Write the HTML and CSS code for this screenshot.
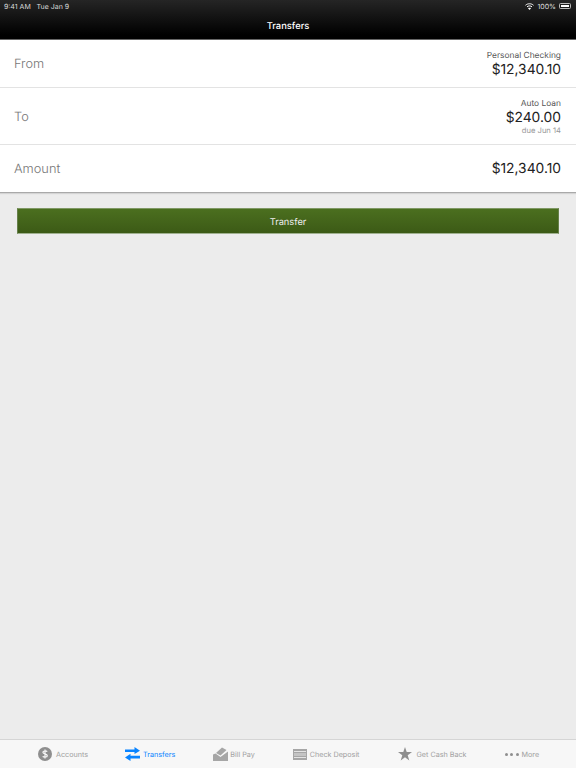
FILE: index.html
```html
<!DOCTYPE html>
<html lang="en">
<head>
  <meta charset="UTF-8" />
  <meta name="viewport" content="width=device-width, initial-scale=1.0"/>
  <title>Transfers</title>
  <link rel="stylesheet" href="styles.css">
</head>
<body>

<div class="app">
  <div class="top-bar">
    <div class="status-bar">
      <span class="status-time">9:41 AM&nbsp;&nbsp; Tue Jan 9</span>
      <span class="status-right">
        <svg class="wifi-icon" width="9" height="7" viewBox="0 0 18 14">
          <path d="M1 4.5 C5.5 0.5 12.5 0.5 17 4.5" fill="none" stroke="#fff" stroke-width="2"/>
          <path d="M4 7.7 C7 5.2 11 5.2 14 7.7" fill="none" stroke="#fff" stroke-width="2"/>
          <path d="M9 14 L6 10.6 C8 9.4 10 9.4 12 10.6 Z" fill="#fff"/>
        </svg>
        <span>100%</span>
        <span class="battery"><span class="battery-fill"></span></span>
      </span>
    </div>
    <div class="nav-title">Transfers</div>
  </div>

  <!-- transfer form -->
  <div class="form-card">
    <div class="form-row row-from">
      <div class="row-label">From</div>
      <div class="row-value">
        <div class="value-name">Personal Checking</div>
        <div class="value-amount">$12,340.10</div>
      </div>
    </div>
    <div class="form-row row-to">
      <div class="row-label">To</div>
      <div class="row-value">
        <div class="value-name">Auto Loan</div>
        <div class="value-amount">$240.00</div>
        <div class="value-due">due Jun 14</div>
      </div>
    </div>
    <div class="form-row row-amount">
      <div class="row-label">Amount</div>
      <div class="row-value">
        <div class="value-amount">$12,340.10</div>
      </div>
    </div>
  </div>

  <div class="button-wrap">
    <button class="transfer-btn">Transfer</button>
  </div>

  <!-- bottom tabs -->
  <div class="tab-bar">
    <div class="tab tab-accounts">
      <svg width="14" height="14" viewBox="0 0 14 14">
        <circle cx="7" cy="7" r="7" fill="#8e8e8e"/>
        <path d="M9.2 4.6 C8.6 3.8 4.9 3.5 4.9 5.3 C4.9 7.1 9.3 6.7 9.3 8.7 C9.3 10.5 5.4 10.2 4.7 9.3 M7 2.4 V11.6" fill="none" stroke="#f7f7f7" stroke-width="1.2"/>
      </svg>
      <span>Accounts</span>
    </div>
    <div class="tab tab-transfers active">
      <svg width="15" height="14" viewBox="0 0 15 14">
        <path d="M0 2.4 H9.5 V0 L15 3.8 L9.5 7 V5 H0 Z" fill="#0a84ff"/>
        <path d="M15 8.8 H5.5 V6.8 L0 10.4 L5.5 14 V11.4 H15 Z" fill="#0a84ff"/>
      </svg>
      <span>Transfers</span>
    </div>
    <div class="tab tab-billpay">
      <svg width="15" height="14" viewBox="0 0 15 14">
        <path d="M3 6 L9 0.5 L13.5 3 L7.5 8.5 Z" fill="#a6a6a6"/>
        <path d="M0 7.5 L2.5 6.5 L7.5 10 L15 4.5 V14 H0 Z" fill="#a6a6a6"/>
      </svg>
      <span>Bill Pay</span>
    </div>
    <div class="tab tab-deposit">
      <svg width="14" height="11" viewBox="0 0 14 11">
        <rect width="14" height="11" fill="#a6a6a6"/>
        <rect x="1" y="2" width="12" height="1" fill="#e4e4e4"/>
        <rect x="1" y="4" width="12" height="3" fill="#c4c4c4"/>
        <rect x="1" y="8" width="12" height="1" fill="#e4e4e4"/>
      </svg>
      <span>Check Deposit</span>
    </div>
    <div class="tab tab-cash">
      <svg width="14" height="14" viewBox="0 0 14 14">
        <path d="M7 0 L8.7 5 H14 L9.7 8.2 L11.3 13.6 L7 10.3 L2.7 13.6 L4.3 8.2 L0 5 H5.3 Z" fill="#8e8e8e"/>
      </svg>
      <span>Get Cash Back</span>
    </div>
    <div class="tab tab-more">
      <span class="dots"><i></i><i></i><i></i></span>
      <span>More</span>
    </div>
  </div>
</div>

</body>
</html>
```

FILE: styles.css
```css
* {
  box-sizing: border-box;
}

html, body {
  margin: 0;
  height: 100%;
}

body {
  background-color: #ececec;
  font-family: 'Inter', 'Liberation Sans', sans-serif;
  color: #222;
  text-rendering: geometricPrecision;
}

.app {
  display: flex;
  flex-direction: column;
  height: 768px;
}

.top-bar {
  height: 40px;
  background: linear-gradient(#252525, #000 90%);
  border-bottom: 1px solid #666;
  color: #fff;
}

.status-bar {
  display: flex;
  justify-content: space-between;
  align-items: center;
  height: 12px;
  padding: 0 4px;
  font-size: 7px;
  color: #ddd;
}

.status-right {
  display: flex;
  align-items: center;
  gap: 3px;
}

.battery {
  display: flex;
  width: 12px;
  height: 6px;
  margin-right: 1px;
  padding: 1px;
  border: 0.5px solid #bbb;
  border-radius: 1.5px;
}

.battery-fill {
  display: block;
  width: 100%;
  background-color: #fff;
}

.nav-title {
  text-align: center;
  font-size: 9.4px;
  font-weight: 500;
  line-height: 29px;
}

.form-card {
  background-color: #fff;
  border-bottom: 1px solid #a9a9a9;
  box-shadow: 0 1px 1px rgba(0, 0, 0, 0.1);
}

.form-row {
  display: flex;
  justify-content: space-between;
  align-items: center;
  padding: 0 15px 0 14px;
  border-bottom: 1px solid #e3e3e3;
}

.form-row:last-child {
  border-bottom: none;
}

.row-from {
  height: 48px;
  padding-top: 1px;
}

.row-to {
  height: 57px;
  padding-top: 1px;
}

.row-amount {
  height: 47px;
}

.row-label {
  padding-top: 1px;
  font-size: 12.8px;
  font-weight: 300;
  color: #777;
}

.row-value {
  text-align: right;
}

.value-name {
  font-size: 8.4px;
  line-height: 12px;
  color: #555;
}

.value-amount {
  font-size: 13.8px;
  line-height: 16px;
  color: #222;
}

.value-due {
  font-size: 7.6px;
  line-height: 10px;
  color: #999;
}

.button-wrap {
  padding: 15px 17px 0;
  flex: 1;
}

.transfer-btn {
  display: block;
  width: 100%;
  height: 26px;
  padding: 2px 0 0;
  background: linear-gradient(#4b6f1f, #3c5a16);
  border: 1px solid #66804a;
  border-top-color: #7f9864;
  border-bottom-color: #9fb08f;
  color: #eee;
  font-family: inherit;
  font-size: 9.3px;
  text-rendering: geometricPrecision;
}

.tab-bar {
  display: flex;
  align-items: center;
  height: 29px;
  padding-left: 38px;
  background-color: #f7f7f7;
  border-top: 1px solid #d5d5d5;
  font-size: 7.2px;
  color: #a0a0a0;
}

.tab {
  display: flex;
  align-items: center;
  gap: 4px;
}

.tab.active {
  color: #0a84ff;
}

.tab-accounts { margin-right: 37px; }
.tab-transfers { margin-right: 38px; gap: 3px; }
.tab-billpay { margin-right: 38px; gap: 2px; }
.tab-deposit { margin-right: 39px; gap: 3px; }
.tab-cash { margin-right: 38px; }
.tab-more { gap: 3px; }

.dots {
  display: flex;
  gap: 2.5px;
}

.dots i {
  display: block;
  width: 3px;
  height: 3px;
  border-radius: 50%;
  background-color: #8e8e8e;
}
```
